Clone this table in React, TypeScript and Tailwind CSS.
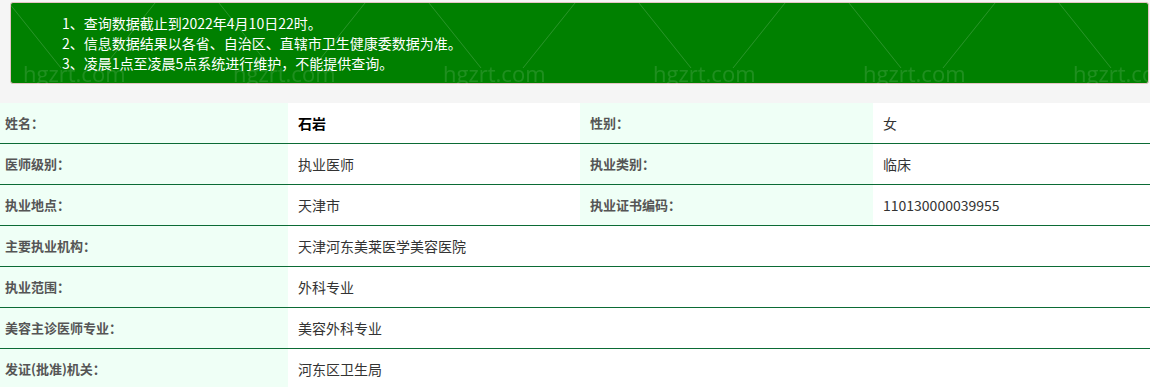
import React from 'react';

interface InfoRow {
  label: string;
  value: string;
  label2?: string;
  value2?: string;
  strong?: boolean;
}

const notices = [
  '1、查询数据截止到2022年4月10日22时。',
  '2、信息数据结果以各省、自治区、直辖市卫生健康委数据为准。',
  '3、凌晨1点至凌晨5点系统进行维护，不能提供查询。',
];

const rows: InfoRow[] = [
  { label: '姓名：', value: '石岩', label2: '性别：', value2: '女', strong: true },
  { label: '医师级别：', value: '执业医师', label2: '执业类别：', value2: '临床' },
  { label: '执业地点：', value: '天津市', label2: '执业证书编码：', value2: '110130000039955' },
  { label: '主要执业机构：', value: '天津河东美莱医学美容医院' },
  { label: '执业范围：', value: '外科专业' },
  { label: '美容主诊医师专业：', value: '美容外科专业' },
  { label: '发证(批准)机关：', value: '河东区卫生局' },
];

function Watermark() {
  return (
    <svg className="absolute inset-0 w-full h-full pointer-events-none" aria-hidden="true">
      <defs>
        <pattern id="wm" x="0" y="0" width="210" height="103" patternUnits="userSpaceOnUse">
          <line x1="9" y1="3" x2="61" y2="68" stroke="rgba(255,255,255,0.16)" strokeWidth="1" />
          <line x1="103" y1="68" x2="155" y2="3" stroke="rgba(255,255,255,0.16)" strokeWidth="1" />
          <text
            x="23"
            y="82"
            fontSize="22"
            fill="rgba(255,255,255,0.12)"
            fontFamily="'Open Sans', 'Noto Sans', sans-serif"
          >
            hgzrt.com
          </text>
        </pattern>
      </defs>
      <rect width="100%" height="100%" fill="url(#wm)" />
    </svg>
  );
}

export default function App() {
  return (
    <div
      className="w-full h-[387px] overflow-hidden bg-[#f5f5f5]"
      style={{ fontFamily: "'Noto Sans CJK SC', 'Noto Sans', sans-serif" }}
    >
      <div className="relative pt-[2px] pb-[19px] pl-[10px] pr-[1px]">
        <div className="bg-[#008000] border border-[#e4c4c4] rounded-[3px] py-[10px] pl-[51px] text-white text-[14px] leading-[20px]">
          {notices.map((n) => (
            <div key={n}>{n}</div>
          ))}
        </div>
        <Watermark />
      </div>

      <div className="bg-white">
        {rows.map((row) => (
          <div
            key={row.label}
            className="grid grid-cols-[288px_292px_293px_1fr] h-[41px] border-b border-[#0b6b35]"
          >
            <div className="flex items-center pl-[5px] bg-[#effff6] text-[13px] font-bold text-[#555]">
              {row.label}
            </div>
            {row.label2 ? (
              <>
                <div
                  className={`flex items-center pl-[10px] text-[14px] ${
                    row.strong ? 'font-bold text-black' : 'text-[#333]'
                  }`}
                >
                  {row.value}
                </div>
                <div className="flex items-center pl-[10px] bg-[#effff6] text-[13px] font-bold text-[#555]">
                  {row.label2}
                </div>
                <div className="flex items-center pl-[10px] text-[14px] text-[#333]">{row.value2}</div>
              </>
            ) : (
              <div className="col-span-3 flex items-center pl-[10px] text-[14px] text-[#333]">{row.value}</div>
            )}
          </div>
        ))}
      </div>
    </div>
  );
}
